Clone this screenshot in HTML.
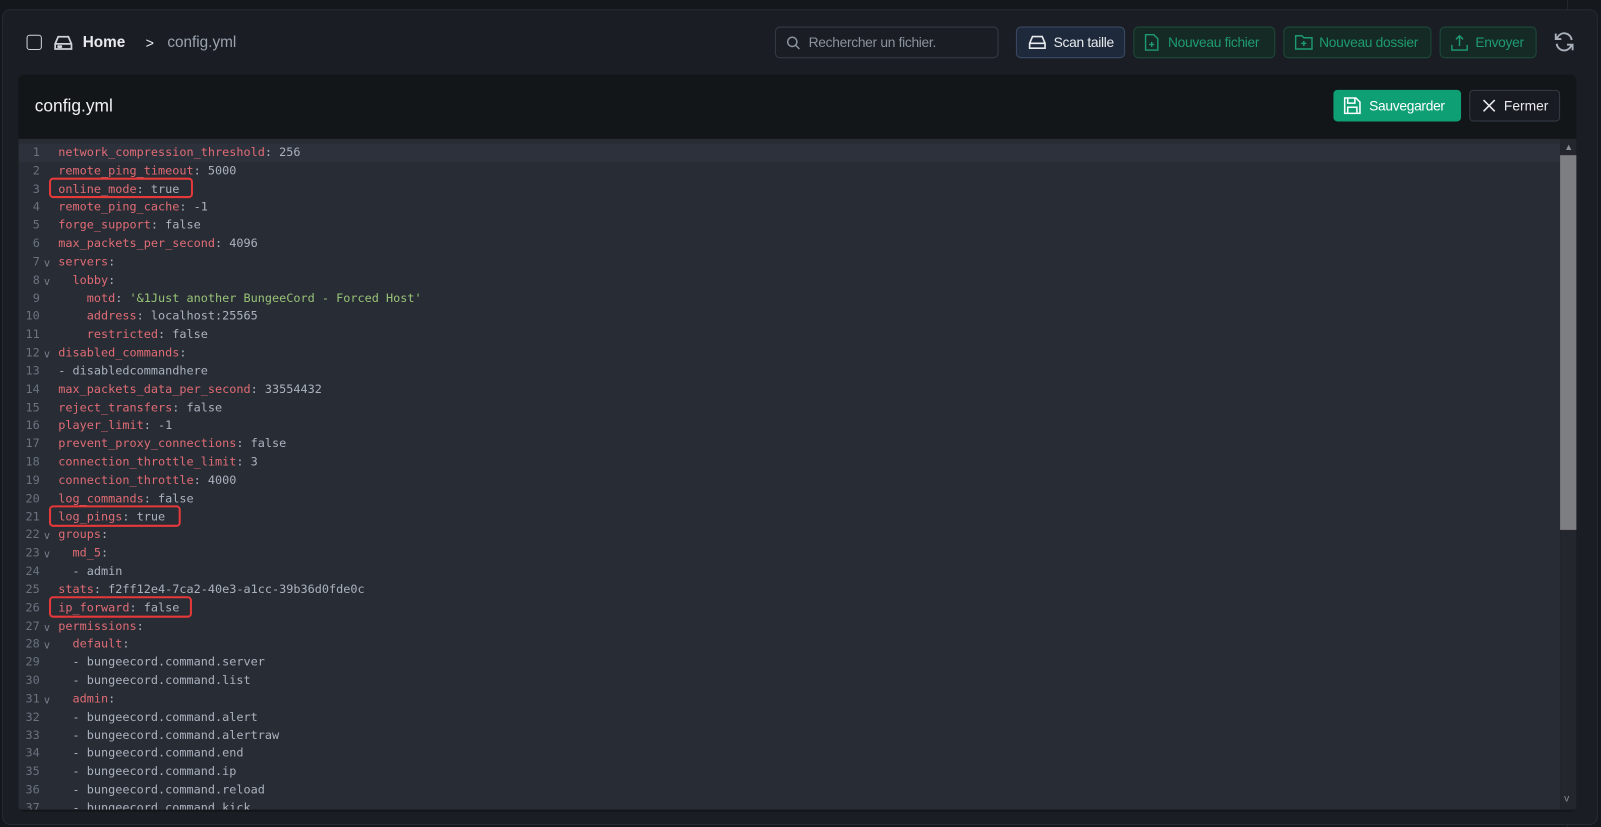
<!DOCTYPE html>
<html><head><meta charset="utf-8"><style>
*{margin:0;padding:0;box-sizing:border-box}
body{width:1601px;height:827px;background:#14171b;font-family:"Liberation Sans",sans-serif;overflow:hidden;position:relative}
#w{position:absolute;left:0;top:0;width:1568px;height:810px;transform:scale(1.021);transform-origin:0 0}
.panel{position:absolute;left:2px;top:9px;width:1563px;height:799px;background:#1a1e24;border:1px solid #262b33;border-radius:8px}
.pscroll{position:absolute;left:1567px;top:0;width:34px;height:827px;background:#15181c;border-left:1px solid #22262c}
.top{position:absolute;top:26px;height:31px;display:flex;align-items:center}
.btn{position:absolute;top:26px;height:31px;border-radius:5px;display:flex;align-items:center;font-size:13.5px;padding-left:10px;letter-spacing:-.3px;white-space:nowrap;overflow:hidden}
.g{border:1px solid #1d4a3a;background:#152a24;color:#1e9b70}
.card{position:absolute;left:18px;top:73px;width:1526px;height:722px;background:#131619;border-radius:6px;overflow:hidden}
.code{position:absolute;left:0;top:63px;width:1510px;height:657px;background:#282c34;overflow:hidden}
.active{position:absolute;left:0;top:5px;width:1510px;height:18px;background:#2c313b}
.lines{position:absolute;left:0;top:5px;font-family:"DejaVu Sans Mono","Liberation Mono",monospace;font-size:11.6px;line-height:17.83px;color:#abb2bf;white-space:pre}
.ln{display:inline-block;width:39px;color:#6b7280;line-height:17.83px;position:relative}
.ln b{font-weight:normal;display:inline-block;width:21px;text-align:right}
.k{color:#e06c75}.s{color:#98c379}
.f{color:#7a8190;font-size:10px;line-height:10px;position:absolute;left:25px;top:6px}
.box{position:absolute;border:2px solid #e5393a;border-radius:4px}
.sb{position:absolute;left:1510px;top:63px;width:16px;height:657px;background:#23262c}
.thumb{position:absolute;left:1510px;top:79px;width:16px;height:367px;background:#7d7e82}
</style></head><body>
<div class="pscroll"></div>
<div id="w">
<div class="panel"></div>
<div class="top" style="left:26px">
<div style="width:15px;height:15px;border:1.6px solid #cfd3d8;border-radius:3px"></div>
<svg style="margin-left:11px" width="20" height="18" viewBox="0 0 20 18" fill="none" stroke="#cfd3d8" stroke-width="1.7"><path d="M2 10 L5 3 H15 L18 10 V15 H2 Z M2 10 H18"/><circle cx="5.5" cy="12.7" r=".6" fill="#cfd3d8"/><circle cx="7.5" cy="12.7" r=".6" fill="#cfd3d8"/></svg>
<span style="margin-left:9px;color:#e8eaed;font-size:15px;font-weight:bold">Home</span>
<span style="margin-left:20px;color:#e8eaed;font-size:14px">&gt;</span>
<span style="margin-left:13px;color:#9aa3ae;font-size:15px">config.yml</span>
</div>
<div class="btn" style="left:759px;width:219px;border:1px solid #343a44;background:#1a1e24;color:#8a929d">
<svg width="14" height="14" viewBox="0 0 14 14" fill="none" stroke="#8a929d" stroke-width="1.5"><circle cx="6" cy="6" r="4.5"/><path d="M9.3 9.3L13 13"/></svg><span style="margin-left:8px">Rechercher un fichier.</span></div>
<div class="btn" style="left:995px;width:107px;border:1px solid #3a4a63;background:#1e2a3b;color:#e8eaed">
<svg width="20" height="17" viewBox="0 0 20 18" fill="none" stroke="#e8eaed" stroke-width="1.7"><path d="M2 10 L5 3 H15 L18 10 V15 H2 Z M2 10 H18"/></svg><span style="margin-left:6px">Scan taille</span></div>
<div class="btn g" style="left:1110px;width:139px"><svg width="14" height="17" viewBox="0 0 14 17" fill="none" stroke="#1e9b70" stroke-width="1.4"><path d="M1 1H9L13 5V16H1Z M7 8V13 M4.5 10.5H9.5"/></svg><span style="margin-left:9px">Nouveau fichier</span></div>
<div class="btn g" style="left:1257px;width:145px"><svg width="18" height="15" viewBox="0 0 18 15" fill="none" stroke="#1e9b70" stroke-width="1.4"><path d="M1 1H7L9 3H17V14H1Z M9 6V11 M6.5 8.5H11.5"/></svg><span style="margin-left:6px">Nouveau dossier</span></div>
<div class="btn g" style="left:1410px;width:95px"><svg width="17" height="16" viewBox="0 0 17 16" fill="none" stroke="#1e9b70" stroke-width="1.4"><path d="M1 10V15H16V10 M8.5 11V1 M5 4.5L8.5 1L12 4.5"/></svg><span style="margin-left:7px">Envoyer</span></div>
<svg style="position:absolute;left:1521px;top:30px" width="22" height="22" viewBox="0 0 24 24" fill="none" stroke="#aab1ba" stroke-width="2"><path d="M20 10A8 8 0 0 0 5 7L3 9 M3 3V9H9 M4 14A8 8 0 0 0 19 17L21 15 M21 21V15H15"/></svg>
<div class="card">
<div style="position:absolute;left:16px;top:21px;color:#f0f2f4;font-size:17px">config.yml</div>
<div style="position:absolute;left:1288px;top:15px;width:125px;height:31px;background:#0e9f74;border-radius:4px;color:#fff;font-size:13.5px;letter-spacing:-.3px;display:flex;align-items:center;padding-left:10px"><svg width="17" height="17" viewBox="0 0 17 17" fill="none" stroke="#fff" stroke-width="1.5"><path d="M1 1H12L16 5V16H1Z M4 1V6H11V1 M4 16V10H13V16"/></svg><span style="margin-left:8px">Sauvegarder</span></div>
<div style="position:absolute;left:1421px;top:15px;width:89px;height:31px;border:1px solid #353b45;background:#181c22;border-radius:4px;color:#e8eaed;font-size:13.5px;display:flex;align-items:center;padding-left:12px"><svg width="13" height="13" viewBox="0 0 13 13" stroke="#e8eaed" stroke-width="1.5"><path d="M1 1L12 12M12 1L1 12"/></svg><span style="margin-left:8px">Fermer</span></div>
<div class="code"><div class="active"></div>
<div class="lines"><span class="ln"><b>1</b></span><span class="k">network_compression_threshold</span>: 256
<span class="ln"><b>2</b></span><span class="k">remote_ping_timeout</span>: 5000
<span class="ln"><b>3</b></span><span class="k">online_mode</span>: true
<span class="ln"><b>4</b></span><span class="k">remote_ping_cache</span>: -1
<span class="ln"><b>5</b></span><span class="k">forge_support</span>: false
<span class="ln"><b>6</b></span><span class="k">max_packets_per_second</span>: 4096
<span class="ln"><b>7</b><span class="f">v</span></span><span class="k">servers</span>:
<span class="ln"><b>8</b><span class="f">v</span></span>  <span class="k">lobby</span>:
<span class="ln"><b>9</b></span>    <span class="k">motd</span>: <span class="s">'&amp;1Just another BungeeCord - Forced Host'</span>
<span class="ln"><b>10</b></span>    <span class="k">address</span>: localhost:25565
<span class="ln"><b>11</b></span>    <span class="k">restricted</span>: false
<span class="ln"><b>12</b><span class="f">v</span></span><span class="k">disabled_commands</span>:
<span class="ln"><b>13</b></span>- disabledcommandhere
<span class="ln"><b>14</b></span><span class="k">max_packets_data_per_second</span>: 33554432
<span class="ln"><b>15</b></span><span class="k">reject_transfers</span>: false
<span class="ln"><b>16</b></span><span class="k">player_limit</span>: -1
<span class="ln"><b>17</b></span><span class="k">prevent_proxy_connections</span>: false
<span class="ln"><b>18</b></span><span class="k">connection_throttle_limit</span>: 3
<span class="ln"><b>19</b></span><span class="k">connection_throttle</span>: 4000
<span class="ln"><b>20</b></span><span class="k">log_commands</span>: false
<span class="ln"><b>21</b></span><span class="k">log_pings</span>: true
<span class="ln"><b>22</b><span class="f">v</span></span><span class="k">groups</span>:
<span class="ln"><b>23</b><span class="f">v</span></span>  <span class="k">md_5</span>:
<span class="ln"><b>24</b></span>  - admin
<span class="ln"><b>25</b></span><span class="k">stats</span>: f2ff12e4-7ca2-40e3-a1cc-39b36d0fde0c
<span class="ln"><b>26</b></span><span class="k">ip_forward</span>: false
<span class="ln"><b>27</b><span class="f">v</span></span><span class="k">permissions</span>:
<span class="ln"><b>28</b><span class="f">v</span></span>  <span class="k">default</span>:
<span class="ln"><b>29</b></span>  - bungeecord.command.server
<span class="ln"><b>30</b></span>  - bungeecord.command.list
<span class="ln"><b>31</b><span class="f">v</span></span>  <span class="k">admin</span>:
<span class="ln"><b>32</b></span>  - bungeecord.command.alert
<span class="ln"><b>33</b></span>  - bungeecord.command.alertraw
<span class="ln"><b>34</b></span>  - bungeecord.command.end
<span class="ln"><b>35</b></span>  - bungeecord.command.ip
<span class="ln"><b>36</b></span>  - bungeecord.command.reload
<span class="ln"><b>37</b></span>  - bungeecord.command.kick</div>
</div>
<div class="sb"></div><div class="thumb"></div>
<div style="position:absolute;left:1514px;top:66px;color:#8a8d92;font-size:9px">&#9650;</div>
<div style="position:absolute;left:1514px;top:704px;color:#8a8d92;font-size:10px">v</div>
</div>
<div class="box" style="left:48px;top:174px;width:141px;height:20px"></div>
<div class="box" style="left:48px;top:495px;width:129px;height:21px"></div>
<div class="box" style="left:48px;top:584px;width:140px;height:21px"></div>
</div>
</body></html>
